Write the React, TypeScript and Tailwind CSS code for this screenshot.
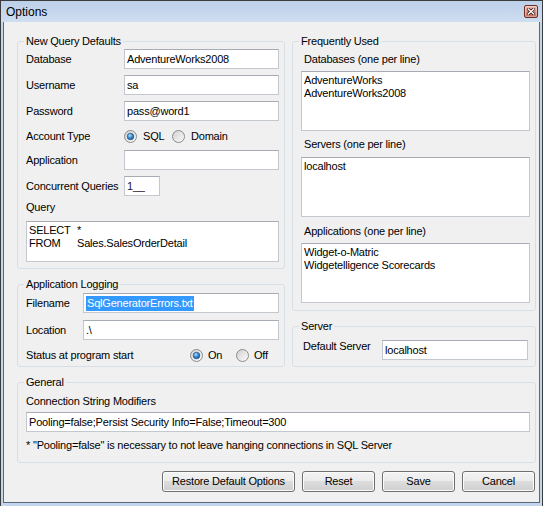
import { useId, type ReactNode } from 'react';
import clsx from 'clsx';

function Radio({ checked }: { checked?: boolean }) {
  const raw = useId();
  const id = raw.replace(/[^a-zA-Z0-9]/g, '');
  return (
    <svg width="13" height="13" viewBox="0 0 13 13" className="shrink-0">
      <defs>
        <linearGradient id={`${id}ring`} x1="0" y1="0" x2="1" y2="1">
          <stop offset="0" stopColor="#cfcfcf" />
          <stop offset="1" stopColor="#fdfdfd" />
        </linearGradient>
        <radialGradient id={`${id}dot`} cx="0.4" cy="0.35" r="0.75">
          <stop offset="0" stopColor="#b4e2ff" />
          <stop offset="0.45" stopColor="#3f8fd6" />
          <stop offset="1" stopColor="#0f4680" />
        </radialGradient>
      </defs>
      <circle cx="6.5" cy="6.5" r="6" fill={`url(#${id}ring)`} stroke="#8b8b8b" />
      {checked && <circle cx="6.5" cy="6.5" r="3.3" fill={`url(#${id}dot)`} stroke="#1b4b7c" strokeWidth="0.6" />}
    </svg>
  );
}

function Group({ title, className, children }: { title: string; className?: string; children: ReactNode }) {
  return (
    <fieldset className={clsx('border border-[#d5dfe5] rounded-[3px] pl-[8px]', className)}>
      <legend className="px-[2px] -ml-[2px] leading-[13px]">{title}</legend>
      {children}
    </fieldset>
  );
}

function TextBox({ className, children }: { className?: string; children?: ReactNode }) {
  return (
    <div
      className={clsx(
        'h-[20px] shrink-0 bg-white border border-[#c3c7ce] border-t-[#a7abb3] flex items-center pl-[2px] whitespace-nowrap overflow-hidden',
        className,
      )}
    >
      {children}
    </div>
  );
}

function TextArea({ className, children }: { className?: string; children?: ReactNode }) {
  return (
    <div className={clsx('shrink-0 bg-white border border-[#c3c7ce] border-t-[#a7abb3] pt-[2px] pl-[2px] whitespace-pre', className)}>
      {children}
    </div>
  );
}

function Btn({ className, children }: { className?: string; children: ReactNode }) {
  return (
    <button
      className={clsx(
        'h-[21px] rounded-[3px] border border-[#707070] bg-[linear-gradient(to_bottom,#f3f3f3_0%,#ebebeb_50%,#dddddd_50%,#cfcfcf_100%)] shadow-[inset_0_0_0_1px_#fbfbfb] leading-[13px] text-black',
        className,
      )}
    >
      {children}
    </button>
  );
}

function CloseBtn() {
  return (
    <div className="w-[14px] h-[13px] rounded-[2px] border border-[#6a2f28] bg-linear-to-b from-[#ebbcb2] to-[#c56a5b] shadow-[inset_0_0_0_1px_rgba(255,255,255,0.35)] flex items-center justify-center">
      <svg width="8" height="7" viewBox="0 0 8 7">
        <path d="M1.2 1L6.8 6M6.8 1L1.2 6" stroke="#3b1a15" strokeWidth="3" strokeLinecap="square" />
        <path d="M1.2 1L6.8 6M6.8 1L1.2 6" stroke="#ffffff" strokeWidth="1.4" strokeLinecap="square" />
      </svg>
    </div>
  );
}

export default function App() {
  return (
    <div className="w-[543px] h-[506px] flex flex-col bg-[#c4d6ed] border-x border-t border-[#3c3c3c] font-['Liberation_Sans',Arial,sans-serif] text-[11px] leading-[13px] tracking-[-0.2px] text-black overflow-hidden">
      <div className="h-[21px] shrink-0 flex items-center justify-between pl-[5px] pr-[4px] bg-linear-to-b from-[#bcd0e9] to-[#cfdef1]">
        <span className="text-[12px] tracking-normal pt-[2px]">Options</span>
        <CloseBtn />
      </div>

      <div className="flex-1 mx-[2px] mb-[3px] bg-[#f0f0f0] border-x border-b border-[#5a6877] pl-[13px] pr-[3px] pt-[13px] flex flex-col">
        <div className="flex gap-[7px]">
          {/* left column */}
          <div className="w-[268px] flex flex-col">
            <Group title="New Query Defaults" className="h-[234px]">
              <div className="flex flex-col">
                <div className="mt-[1px] flex items-center h-[20px]">
                  <span className="w-[98px]">Database</span>
                  <TextBox className="w-[155px]">AdventureWorks2008</TextBox>
                </div>
                <div className="mt-[6px] flex items-center h-[20px]">
                  <span className="w-[98px]">Username</span>
                  <TextBox className="w-[155px]">sa</TextBox>
                </div>
                <div className="mt-[6px] flex items-center h-[20px]">
                  <span className="w-[98px]">Password</span>
                  <TextBox className="w-[155px]">pass@word1</TextBox>
                </div>
                <div className="mt-[5px] flex items-center h-[20px]">
                  <span className="w-[98px]">Account Type</span>
                  <span className="flex items-center">
                    <Radio checked />
                    <span className="ml-[6px] w-[29px]">SQL</span>
                  </span>
                  <span className="flex items-center">
                    <Radio />
                    <span className="ml-[6px]">Domain</span>
                  </span>
                </div>
                <div className="mt-[4px] flex items-center h-[20px]">
                  <span className="w-[98px]">Application</span>
                  <TextBox className="w-[155px]" />
                </div>
                <div className="mt-[6px] flex items-center h-[20px]">
                  <span className="w-[98px]">Concurrent Queries</span>
                  <TextBox className="w-[36px] text-[#1e1030]">1__</TextBox>
                </div>
                <div className="mt-[5px] h-[13px]">Query</div>
                <TextArea className="mt-[7px] w-[253px] h-[41px]">
                  <div>
                    <span className="inline-block w-[48px]">SELECT</span>*
                  </div>
                  <div>
                    <span className="inline-block w-[48px]">FROM</span>Sales.SalesOrderDetail
                  </div>
                </TextArea>
              </div>
            </Group>

            <Group title="Application Logging" className="mt-[9px] h-[89px]">
              <div className="flex flex-col">
                <div className="mt-[2px] flex items-center h-[20px]">
                  <span className="w-[57px]">Filename</span>
                  <TextBox className="w-[196px] pl-[1px]">
                    <span className="bg-[#3399ff] text-white px-[1px] leading-[15px]">SqlGeneratorErrors.txt</span>
                  </TextBox>
                </div>
                <div className="mt-[7px] flex items-center h-[20px]">
                  <span className="w-[57px]">Location</span>
                  <TextBox className="w-[196px]">.\</TextBox>
                </div>
                <div className="mt-[9px] flex items-center h-[13px]">
                  <span className="w-[164px]">Status at program start</span>
                  <span className="flex items-center w-[46px]">
                    <Radio checked />
                    <span className="ml-[5px]">On</span>
                  </span>
                  <span className="flex items-center">
                    <Radio />
                    <span className="ml-[5px]">Off</span>
                  </span>
                </div>
              </div>
            </Group>
          </div>

          {/* right column */}
          <div className="w-[244px] flex flex-col">
            <Group title="Frequently Used" className="h-[276px]">
              <div className="flex flex-col">
                <div className="mt-[5px] ml-[3px] h-[13px]">Databases (one per line)</div>
                <TextArea className="mt-[5px] w-[229px] h-[60px]">
                  <div>AdventureWorks</div>
                  <div>AdventureWorks2008</div>
                </TextArea>
                <div className="mt-[7px] ml-[3px] h-[13px]">Servers (one per line)</div>
                <TextArea className="mt-[6px] w-[229px] h-[60px]">
                  <div>localhost</div>
                </TextArea>
                <div className="mt-[8px] ml-[3px] h-[13px]">Applications (one per line)</div>
                <TextArea className="mt-[5px] w-[229px] h-[60px]">
                  <div>Widget-o-Matric</div>
                  <div>Widgetelligence Scorecards</div>
                </TextArea>
              </div>
            </Group>

            <Group title="Server" className="mt-[9px] h-[47px]">
              <div className="mt-[7px] flex items-start h-[20px]">
                <span className="ml-[2px] w-[79px]">Default Server</span>
                <TextBox className="w-[146px]">localhost</TextBox>
              </div>
            </Group>
          </div>
        </div>

        <Group title="General" className="mt-[9px] h-[87px]">
          <div className="flex flex-col">
            <div className="mt-[6px] h-[13px]">Connection String Modifiers</div>
            <TextBox className="mt-[4px] w-[504px]">Pooling=false;Persist Security Info=False;Timeout=300</TextBox>
            <div className="mt-[7px] h-[13px]">* "Pooling=false" is necessary to not leave hanging connections in SQL Server</div>
          </div>
        </Group>

        <div className="mt-[8px] flex justify-end gap-[7px] pr-[1px]">
          <Btn className="w-[133px]">Restore Default Options</Btn>
          <Btn className="w-[73px]">Reset</Btn>
          <Btn className="w-[73px]">Save</Btn>
          <Btn className="w-[73px]">Cancel</Btn>
        </div>
      </div>
    </div>
  );
}
